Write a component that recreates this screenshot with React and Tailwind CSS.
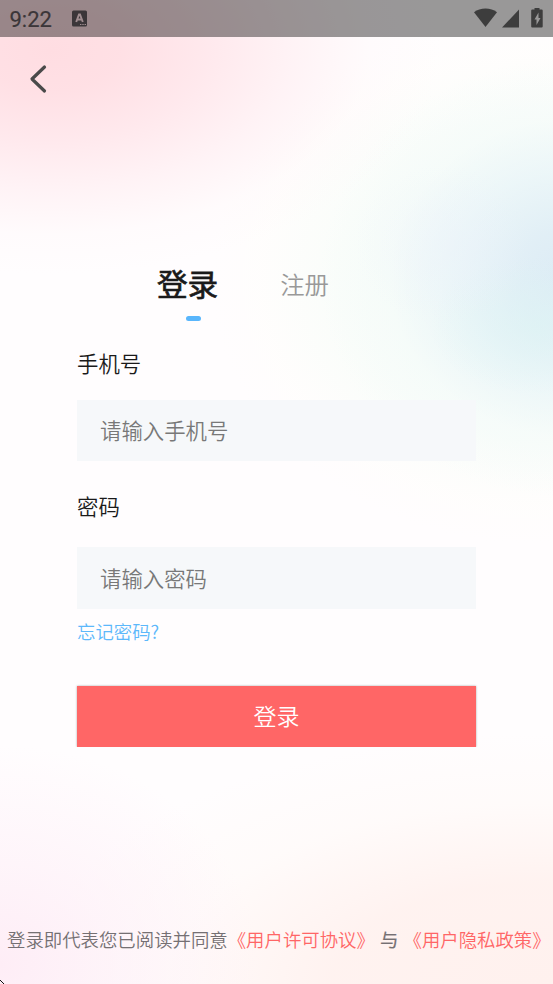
import React, { useState } from 'react';

const TABS = [
  { id: 'login', label: '登录' },
  { id: 'register', label: '注册' },
];

function StatusBar() {
  return (
    <header className="flex h-[37px] shrink-0 items-center justify-between bg-black/40 pl-[9.5px] pr-[9px] text-[#3b3639]">
      <div className="flex items-center">
        <span className="w-[62.5px] font-[Roboto] text-[22px] font-normal leading-[37px] [-webkit-text-stroke:0.2px] mt-px">9:22</span>
        <svg width="15" height="17" viewBox="0 0 15 17">
          <rect width="15" height="16" y="0.5" rx="1.5" fill="currentColor" />
          <path d="M4.2 12 7 4.5h1L10.8 12M5.5 9.5h4" fill="none" stroke="#a08d90" strokeWidth="1.9" />
          <path d="M8 14.5h1.4M10.3 14.5h1.4M12.6 14.5h1.4" stroke="#a08d90" strokeWidth="1.2" />
        </svg>
      </div>
      <svg width="70" height="21" viewBox="0 0 70 21" fill="#3d3d3d">
        <path d="M0 4.3C3.2 1.9 7.2.6 11.5.6S19.8 1.9 23 4.3L11.5 19Z" />
        <path d="M45 1.5V19.5H28Z" />
        <path d="M60.5 0h5v1.5h2.2q1 0 1 1V18.5q0 1-1 1H58.2q-1 0-1-1V2.5q0-1 1-1H60.5ZM64.5 4.5l-4 7h2V17l4-7h-2Z" fillRule="evenodd" />
      </svg>
    </header>
  );
}

function Field({ label, type = 'text', placeholder, value, onChange, className }) {
  return (
    <label className={className}>
      <span className="block h-8 text-[21.4px] leading-[30px] text-[#1a1a1a]">{label}</span>
      <input
        type={type}
        value={value}
        onChange={(e) => onChange(e.target.value)}
        placeholder={placeholder}
        className="block h-[61px] w-full bg-[#f6f8fa] px-[23px] pb-[2px] text-[21.4px] text-[#333] outline-none placeholder:text-[#787878] placeholder:opacity-100"
      />
    </label>
  );
}

export default function App() {
  const [tab, setTab] = useState('login');
  const [phone, setPhone] = useState('');
  const [password, setPassword] = useState('');

  return (
    <div className="relative flex h-[984px] w-[553px] flex-col overflow-hidden bg-[#fffdfe] bg-[radial-gradient(ellipse_390px_225px_at_50px_50px,#ffdde2_0%,#ffdee3f0_18%,#ffe4e9d0_40%,#ffecf098_62%,#fff5f740_82%,#fffdfe00_100%),radial-gradient(ellipse_90px_80px_at_445px_245px,#ecf1fb60_0%,#ecf1fb00_100%),radial-gradient(ellipse_110px_70px_at_540px_325px,#dcf4f390_0%,#dcf4f300_100%),radial-gradient(ellipse_250px_220px_at_570px_278px,#dcebf5_0%,#e0eef6f0_22%,#e8f4f8c0_48%,#f2faf970_72%,#fbfefc00_100%),radial-gradient(ellipse_330px_265px_at_540px_280px,#f3fcf6_0%,#f7fdf8b0_60%,#fefefa60_85%,#fffdfe00_100%),radial-gradient(ellipse_260px_220px_at_0px_965px,#feedf6_0%,#fef1f8b0_45%,#fffdfe00_100%),radial-gradient(ellipse_520px_250px_at_540px_984px,#fff1ee_0%,#fff1eee0_40%,#fff8f570_72%,#fffdfe00_100%)] font-['Noto_Sans_CJK_SC',sans-serif] font-[350]">
      <StatusBar />

      <button type="button" aria-label="返回" className="ml-[28px] mt-[27px] h-[30px] w-5">
        <svg width="20" height="30" viewBox="0 0 20 30" fill="none" stroke="#4a4a4a" strokeWidth="3.2" strokeLinecap="round" strokeLinejoin="round">
          <path d="M16.5 3 4 15 16.5 27" />
        </svg>
      </button>

      <main className="mx-[77px] mt-[166px] flex flex-col">
        <nav className="ml-[80px] flex h-[61px] gap-[62px]">
          {TABS.map((t) => (
            <button
              key={t.id}
              type="button"
              onClick={() => setTab(t.id)}
              className="flex flex-col items-center"
            >
              <span
                className={
                  tab === t.id
                    ? 'block h-[56px] text-[30.6px] font-normal leading-[46px] text-[#1a1a1a] [-webkit-text-stroke:0.7px]'
                    : 'block h-[56px] text-[24.4px] leading-[47px] text-[#999]'
                }
              >
                {t.label}
              </span>
              {tab === t.id && <span className="ml-[12px] h-[5px] w-[15px] rounded-full bg-[#59b6fc]" />}
            </button>
          ))}
        </nav>

        <Field
          label="手机号"
          placeholder="请输入手机号"
          value={phone}
          onChange={setPhone}
          className="mt-[27px] flex flex-col gap-5"
        />
        <Field
          label="密码"
          type="password"
          placeholder="请输入密码"
          value={password}
          onChange={setPassword}
          className="mt-[30px] flex flex-col gap-6 [&>input]:h-[62px]"
        />

        <a href="#" className="mt-[9px] h-7 text-[18.4px] leading-[26px] text-[#5cb8fb]">忘记密码?</a>

        <button
          type="button"
          className="mt-[40px] h-[61px] bg-[#ff6666] pb-[2px] text-[23px] text-white shadow-[0_0_2px_rgba(0,0,0,0.35)] [clip-path:inset(-2px_-2px_0)]"
        >
          登录
        </button>
      </main>

      <footer className="ml-[7px] mt-auto mb-[31px] h-7 whitespace-pre text-[18.4px] leading-7 text-[#757073]">
        登录即代表您已阅读并同意
        <a href="#" className="text-[#ff6666]">《用户许可协议》</a>
        <span className="mx-px font-normal [-webkit-text-stroke:0.2px]"> 与 </span>
        <a href="#" className="text-[#ff6666]">《用户隐私政策》</a>
      </footer>

      {/* window corner handle */}
      <svg width="4" height="4" viewBox="0 0 4 4" className="absolute bottom-0 left-0">
        <path d="M0 0h1v1h1v1h1v1h1v1H3V3H2V2H1V1H0Z" fill="#111" />
      </svg>
    </div>
  );
}
